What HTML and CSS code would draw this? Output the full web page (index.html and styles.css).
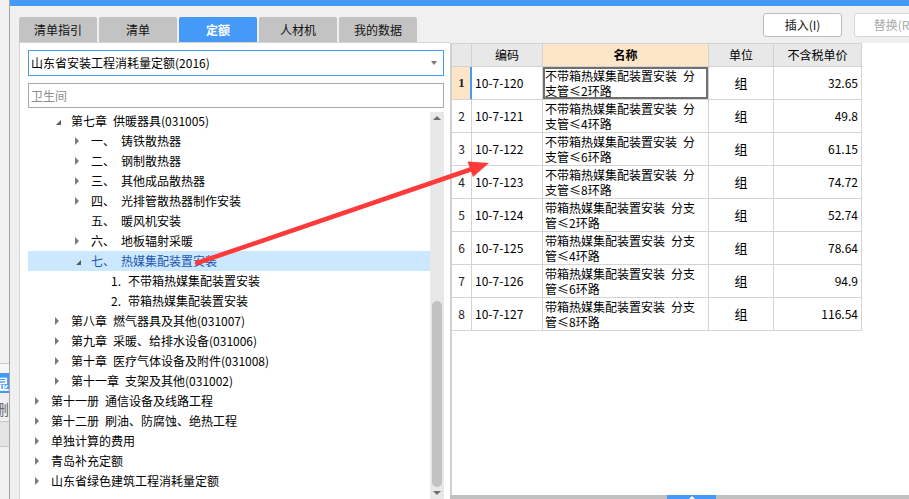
FILE: index.html
```html
<!DOCTYPE html>
<html lang="zh">
<head>
<meta charset="utf-8">
<title>定额</title>
<link rel="stylesheet" href="styles.css">
</head>
<body>
<div class="app">
  <aside class="behind">
    <div class="behind-top"></div>
    <div class="behind-blue"><span>显</span></div>
    <div class="behind-del"><span>删</span></div>
    <div class="behind-box"></div>
  </aside>
  <div class="window">
    <div class="titlebar"></div>
    <div class="main">
      <section class="left">
        <nav class="tabs">
          <div class="tab">清单指引</div>
          <div class="tab">清单</div>
          <div class="tab active">定额</div>
          <div class="tab">人材机</div>
          <div class="tab">我的数据</div>
        </nav>
        <div class="panel">
          <div class="select"><span>山东省安装工程消耗量定额(2016)</span><i class="caret"></i></div>
          <div class="search">卫生间</div>
          <div class="tree-wrap">
            <ul class="tree">
              <li class="row l2"><i class="tg exp"></i><span class="ch">第七章</span>供暖器具(031005)</li>
              <li class="row l3"><i class="tg col"></i><span class="no">一、</span>铸铁散热器</li>
              <li class="row l3"><i class="tg col"></i><span class="no">二、</span>钢制散热器</li>
              <li class="row l3"><i class="tg col"></i><span class="no">三、</span>其他成品散热器</li>
              <li class="row l3"><i class="tg col"></i><span class="no">四、</span>光排管散热器制作安装</li>
              <li class="row l3"><i class="tg"></i><span class="no">五、</span>暖风机安装</li>
              <li class="row l3"><i class="tg col"></i><span class="no">六、</span>地板辐射采暖</li>
              <li class="row l3 sel"><i class="tg exp"></i><span class="no">七、</span>热媒集配装置安装</li>
              <li class="row l4"><i class="tg"></i><span class="no4">1.</span>不带箱热媒集配装置安装</li>
              <li class="row l4"><i class="tg"></i><span class="no4">2.</span>带箱热媒集配装置安装</li>
              <li class="row l2"><i class="tg col"></i><span class="ch">第八章</span>燃气器具及其他(031007)</li>
              <li class="row l2"><i class="tg col"></i><span class="ch">第九章</span>采暖、给排水设备(031006)</li>
              <li class="row l2"><i class="tg col"></i><span class="ch">第十章</span>医疗气体设备及附件(031008)</li>
              <li class="row l2"><i class="tg col"></i><span class="ch">第十一章</span>支架及其他(031002)</li>
              <li class="row l1"><i class="tg col"></i><span class="ch">第十一册</span>通信设备及线路工程</li>
              <li class="row l1"><i class="tg col"></i><span class="ch">第十二册</span>刷油、防腐蚀、绝热工程</li>
              <li class="row l1"><i class="tg col"></i>单独计算的费用</li>
              <li class="row l1"><i class="tg col"></i>青岛补充定额</li>
              <li class="row l1"><i class="tg col"></i>山东省绿色建筑工程消耗量定额</li>
            </ul>
            <div class="vscroll">
              <div class="sb-btn"><i class="sb-up"></i></div>
              <div class="sb-thumb"></div>
              <div class="sb-btn"><i class="sb-down"></i></div>
            </div>
          </div>
        </div>
      </section>
      <section class="right">
        <div class="toolbar">
          <button class="btn" type="button">插入(I)</button>
          <button class="btn" type="button" disabled>替换(R)</button>
        </div>
        <div class="gridarea">
          <div class="grid">
            <div class="hd"></div><div class="hd">编码</div><div class="hd name">名称</div><div class="hd">单位</div><div class="hd">不含税单价</div>

            <div class="c rn cur">1</div><div class="c code">10-7-120</div><div class="c nm focus">不带箱热媒集配装置安装&ensp;分<br>支管≤2环路</div><div class="c unit">组</div><div class="c price">32.65</div>
            <div class="c rn">2</div><div class="c code">10-7-121</div><div class="c nm">不带箱热媒集配装置安装&ensp;分<br>支管≤4环路</div><div class="c unit">组</div><div class="c price">49.8</div>
            <div class="c rn">3</div><div class="c code">10-7-122</div><div class="c nm">不带箱热媒集配装置安装&ensp;分<br>支管≤6环路</div><div class="c unit">组</div><div class="c price">61.15</div>
            <div class="c rn">4</div><div class="c code">10-7-123</div><div class="c nm">不带箱热媒集配装置安装&ensp;分<br>支管≤8环路</div><div class="c unit">组</div><div class="c price">74.72</div>
            <div class="c rn">5</div><div class="c code">10-7-124</div><div class="c nm">带箱热媒集配装置安装&ensp;分支<br>管≤2环路</div><div class="c unit">组</div><div class="c price">52.74</div>
            <div class="c rn">6</div><div class="c code">10-7-125</div><div class="c nm">带箱热媒集配装置安装&ensp;分支<br>管≤4环路</div><div class="c unit">组</div><div class="c price">78.64</div>
            <div class="c rn">7</div><div class="c code">10-7-126</div><div class="c nm">带箱热媒集配装置安装&ensp;分支<br>管≤6环路</div><div class="c unit">组</div><div class="c price">94.9</div>
            <div class="c rn">8</div><div class="c code">10-7-127</div><div class="c nm">带箱热媒集配装置安装&ensp;分支<br>管≤8环路</div><div class="c unit">组</div><div class="c price">116.54</div>
          </div>
        </div>
        <div class="hsplit"><div class="handle"><i class="handle-up"></i></div></div>
      </section>
    </div>
  </div>
</div>
<svg class="arrow" width="909" height="499" viewBox="0 0 909 499" aria-hidden="true">
  <line x1="197" y1="263" x2="472" y2="169" stroke="#ff3a3a" stroke-width="4.5" stroke-linecap="round"/>
  <polygon points="489,163 467.5,161.5 473,177" fill="#ff3a3a"/>
</svg>
</body>
</html>
```

FILE: styles.css
```css
* {
  box-sizing: border-box;
  margin: 0;
  padding: 0;
}

html,
body {
  width: 909px;
  height: 499px;
  overflow: hidden;
}

body {
  position: relative;
  background: #f0f0f0;
  color: #000;
  font-family: "Noto Sans CJK SC", "Noto Sans", sans-serif;
  font-size: 12px;
  line-height: 14px;
}

.app {
  display: flex;
  height: 499px;
}

/* window partially visible behind */
.behind {
  width: 10px;
  flex: none;
  border-right: 1px solid #a6a6a6;
  display: flex;
  flex-direction: column;
  padding-top: 363px;
  overflow: hidden;
}

.behind-top {
  height: 10px;
  border-top: 1px solid #c9c9c9;
  background: #f7f7f7;
}

.behind-blue {
  height: 20px;
  background: #449af6;
  color: #fff;
  font-size: 14px;
  font-weight: bold;
  display: flex;
  justify-content: flex-end;
  align-items: center;
  overflow: hidden;
}

.behind-del {
  height: 24px;
  margin-top: 4px;
  color: #666;
  font-size: 15px;
  display: flex;
  justify-content: flex-end;
  align-items: center;
  overflow: hidden;
}

.behind-box {
  height: 26px;
  border-top: 1px solid #c8c8c8;
  border-bottom: 1px solid #c8c8c8;
  background: #e4e4e4;
}

.window {
  flex: 1;
  display: flex;
  flex-direction: column;
  min-width: 0;
}

.titlebar {
  height: 6px;
  background: #449af6;
  flex: none;
}

.main {
  flex: 1;
  display: flex;
  min-height: 0;
}

/* left side */
.left {
  width: 440px;
  flex: none;
  display: flex;
  flex-direction: column;
  padding: 11px 0 0 9px;
}

.tabs {
  display: flex;
  gap: 2px;
  height: 25px;
  flex: none;
}

.tab {
  width: 78px;
  height: 25px;
  background: #c3c3c3;
  border-radius: 2px 2px 0 0;
  text-align: center;
  line-height: 25px;
  font-size: 12px;
  color: #111;
}

.tab.active {
  background: #449af6;
  color: #fff;
  font-weight: bold;
}

.panel {
  flex: 1;
  min-height: 0;
  background: #fff;
  border-left: 1px solid #d4d4d4;
  border-top: 1px solid #d4d4d4;
  padding: 7px 6px 0 8px;
  display: flex;
  flex-direction: column;
  overflow: hidden;
}

.select {
  height: 26px;
  flex: none;
  border: 1px solid #449af6;
  display: flex;
  align-items: center;
  padding-left: 2px;
  white-space: nowrap;
}

.caret {
  margin-left: auto;
  margin-right: 6px;
  width: 0;
  height: 0;
  border-top: 4px solid #7a7a7a;
  border-left: 3.5px solid transparent;
  border-right: 3.5px solid transparent;
}

.search {
  height: 25px;
  flex: none;
  margin-top: 7px;
  border: 1px solid #a9a9a9;
  padding-left: 2px;
  line-height: 23px;
  color: #8c8c8c;
}

.tree-wrap {
  flex: 1;
  min-height: 0;
  margin-top: 3px;
  display: flex;
}

.tree {
  width: 402px;
  flex: none;
  list-style: none;
}

.row {
  height: 20px;
  display: flex;
  align-items: center;
  white-space: nowrap;
}

.row.l1 { padding-left: 7px; }
.row.l2 { padding-left: 27px; }
.row.l3 { padding-left: 47px; }
.row.l4 { padding-left: 67px; }

.row.sel {
  background: #cce8ff;
  color: #1d57b0;
}

.tg {
  width: 16px;
  height: 20px;
  flex: none;
  position: relative;
}

.tg.col::before {
  content: "";
  position: absolute;
  left: 0;
  top: 6px;
  width: 0;
  height: 0;
  border-left: 4px solid #7a7a7a;
  border-top: 4px solid transparent;
  border-bottom: 4px solid transparent;
}

.tg.exp::before {
  content: "";
  position: absolute;
  left: 1px;
  top: 9px;
  width: 0;
  height: 0;
  border-right: 5px solid #5a5a5a;
  border-top: 5px solid transparent;
}

.ch {
  margin-right: 6px;
}

.no {
  display: inline-block;
  width: 30px;
}

.no4 {
  display: inline-block;
  width: 17px;
}

.vscroll {
  width: 14px;
  flex: none;
  margin-top: 1px;
  background: #e8e8e8;
  display: flex;
  flex-direction: column;
  align-items: center;
}

.sb-btn {
  height: 12px;
  width: 14px;
  display: flex;
  align-items: center;
  justify-content: center;
  flex: none;
}

.sb-up {
  width: 0;
  height: 0;
  border-bottom: 4px solid #6e6e6e;
  border-left: 4px solid transparent;
  border-right: 4px solid transparent;
}

.sb-down {
  width: 0;
  height: 0;
  border-top: 4px solid #6e6e6e;
  border-left: 4px solid transparent;
  border-right: 4px solid transparent;
}

.sb-thumb {
  width: 10px;
  height: 186px;
  margin-top: 177px;
  background: #c2c2c2;
  border-radius: 5px;
  flex: none;
}

/* right side */
.right {
  flex: 1;
  min-width: 0;
  display: flex;
  flex-direction: column;
}

.toolbar {
  height: 37px;
  flex: none;
  display: flex;
  gap: 12px;
  padding: 7px 0 0 313px;
  overflow: hidden;
}

.btn {
  width: 79px;
  height: 24px;
  flex: none;
  background: #fff;
  border: 1px solid #bcbcbc;
  border-radius: 3px;
  font: inherit;
  font-size: 12px;
  color: #111;
}

.btn:disabled {
  color: #a9a9a9;
  border-color: #d6d6d6;
}

.gridarea {
  flex: 1;
  min-height: 0;
  background: #fff;
  border-left: 2px solid #d0d0d0;
}

.grid {
  display: grid;
  grid-template-columns: 20px 71px 166px 65px 88px;
  width: 410px;
  border-top: 1px solid #d2d2d2;
}

.hd {
  height: 23px;
  background: #e8e8e8;
  border-right: 1px solid #d2d2d2;
  border-bottom: 1px solid #d2d2d2;
  display: flex;
  align-items: center;
  justify-content: center;
}

.hd.name {
  background: #fde5c8;
  font-weight: bold;
}

.c {
  height: 33px;
  border-right: 1px solid #d4d4d4;
  border-bottom: 1px solid #d4d4d4;
  display: flex;
  align-items: center;
  white-space: nowrap;
  overflow: hidden;
}

.rn {
  justify-content: center;
  color: #222;
}

.rn.cur {
  background: #fde5c8;
  border-right-color: #449af6;
  box-shadow: inset -1px 0 0 #449af6;
  font-family: "Liberation Serif", serif;
  font-weight: bold;
  font-size: 13px;
}

.code {
  padding-left: 3px;
}

.nm {
  padding-left: 2px;
  line-height: 15px;
}

.nm.focus {
  box-shadow: inset 0 0 0 2px #6f6f6f;
}

.unit {
  justify-content: center;
  font-size: 13px;
}

.price {
  justify-content: flex-end;
  padding-right: 3px;
}

.hsplit {
  height: 4px;
  flex: none;
  background: #c0c0c0;
}

.handle {
  width: 49px;
  height: 4px;
  margin-left: 217px;
  background: #449af6;
  display: flex;
  justify-content: center;
}

.handle-up {
  width: 0;
  height: 0;
  margin-top: 1px;
  border-bottom: 3px solid #fff;
  border-left: 3px solid transparent;
  border-right: 3px solid transparent;
}

.arrow {
  position: absolute;
  left: 0;
  top: 0;
  pointer-events: none;
}
```
